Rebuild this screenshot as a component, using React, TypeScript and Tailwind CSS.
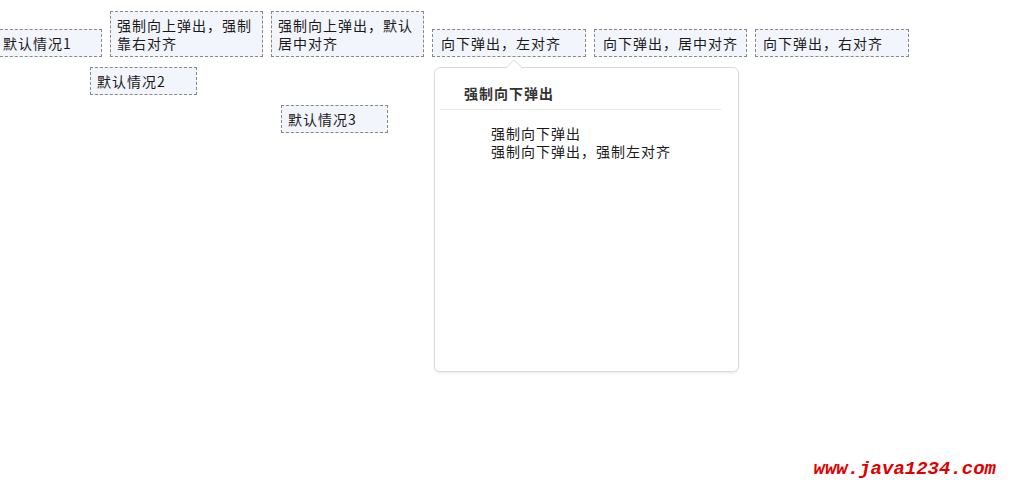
export default function App() {
  const box =
    "border border-dashed border-[#888] bg-[#f3f5fc] pl-[6px] pr-[4px] py-[4px] leading-[18px] tracking-[1px] text-[#1a1a1a]";

  return (
    <div
      className="w-[1011px] h-[493px] bg-white overflow-hidden flex flex-col text-[14px]"
      style={{ fontFamily: '"Noto Sans CJK SC", "Noto Sans", sans-serif' }}
    >
      {/* Top row of triggers */}
      <div className="flex items-end gap-2 mt-[11px] ml-[-5px]">
        <div className={`${box} w-[107px] pl-[7px]`}>默认情况1</div>
        <div className={`${box} w-[153px]`}>
          强制向上弹出，强制
          <br />
          靠右对齐
        </div>
        <div className={`${box} w-[153px]`}>
          强制向上弹出，默认
          <br />
          居中对齐
        </div>
        <div className={`${box} w-[154px] pl-[8px]`}>向下弹出，左对齐</div>
        <div className={`${box} w-[153px] pl-[8px]`}>向下弹出，居中对齐</div>
        <div className={`${box} w-[154px] pl-[7px]`}>向下弹出，右对齐</div>
      </div>

      {/* Second area */}
      <div className="flex items-start">
        <div className={`${box} w-[107px] ml-[90px] mt-[10px]`}>默认情况2</div>
        <div className={`${box} w-[107px] ml-[84px] mt-[48px]`}>默认情况3</div>

        {/* Popup */}
        <div className="relative ml-[46px] mt-[10px] w-[305px] h-[305px] bg-white border border-[#dadada] rounded-[6px] shadow-[0_2px_2px_rgba(0,0,0,0.06)]">
          <svg
            className="absolute left-[70px] top-[-9px]"
            width="18"
            height="10"
            viewBox="0 0 18 10"
          >
            <path d="M0 9.5 L9 1 L18 9.5" fill="#fff" stroke="#dadada" strokeWidth="1" />
            <rect x="1" y="9" width="16" height="2" fill="#fff" />
          </svg>
          <div className="pt-[16px] pl-[29px] leading-[18px] font-bold tracking-[1px] text-[#333]">
            强制向下弹出
          </div>
          <div className="mt-[7px] ml-[5px] mr-[17px] h-px bg-[#e8e8e8]" />
          <div className="mt-[14px] pl-[56px] leading-[18px] tracking-[1px] text-[#1a1a1a]">
            <div>强制向下弹出</div>
            <div>强制向下弹出，强制左对齐</div>
          </div>
        </div>
      </div>

      {/* Watermark */}
      <div
        className="mt-auto self-end mr-[15px] mb-[14px] text-[19px] leading-[20px] font-bold italic text-[#e00000]"
        style={{ fontFamily: '"Liberation Mono", "Courier New", monospace' }}
      >
        www.java1234.com
      </div>
    </div>
  );
}
